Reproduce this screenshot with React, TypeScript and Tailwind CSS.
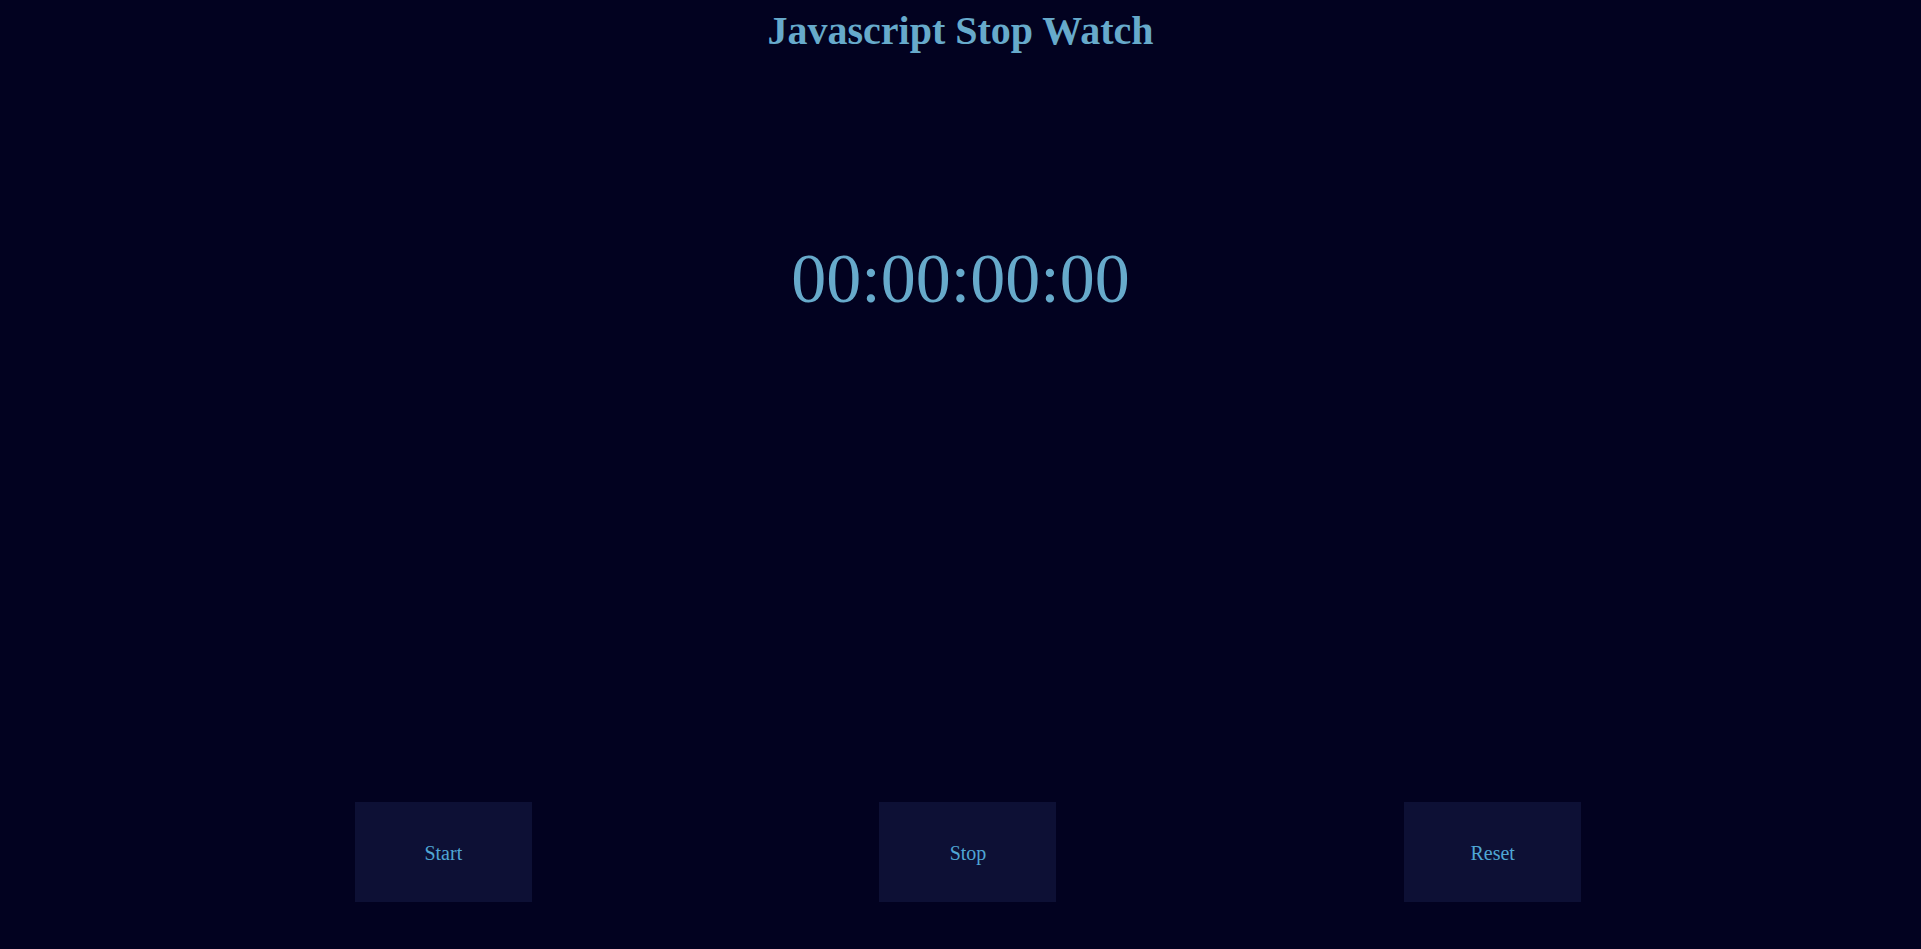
const buttons = ["Start", "Stop", "Reset"];

const App = () => {
  return (
    <div className="min-h-[949px] w-full bg-[#020220] font-['Liberation_Serif','Times_New_Roman',serif]">
      {/* Title */}
      <h1 className="pt-[8px] text-center text-[40px] leading-[46px] font-bold text-[#67aacb]">
        Javascript Stop Watch
      </h1>

      {/* Timer */}
      <div className="mt-[185px] text-center text-[70px] leading-[80px] text-[#67aacb]">
        00:00:00:00
      </div>

      {/* Controls */}
      <div className="mt-[483px] ml-[181px] grid w-[1574px] grid-cols-3 place-items-center">
        {buttons.map((label) => (
          <button
            key={label}
            type="button"
            className="h-[100px] w-[177px] bg-[#0d1035] pt-[2px] text-[20px] text-[#4fa6d4] cursor-pointer"
          >
            {label}
          </button>
        ))}
      </div>
    </div>
  );
};

export default App;
